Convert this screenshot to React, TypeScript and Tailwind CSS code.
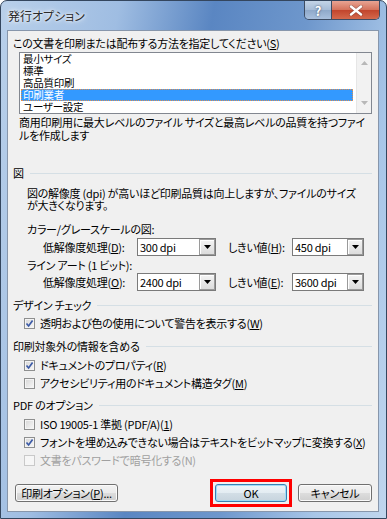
import React from "react";

const Check = ({ checked, disabled, children }: { checked?: boolean; disabled?: boolean; children: React.ReactNode }) => (
  <div className="flex items-center h-[18px] pl-[16px]">
    <span
      className={
        disabled
          ? "w-[11px] h-[11px] border border-[#c9c9c9] bg-[#f6f6f6] flex items-center justify-center"
          : "w-[11px] h-[11px] border border-[#8e8f8f] bg-[linear-gradient(135deg,#d6d6d6,#f8f8f8)] shadow-[inset_0_0_0_1px_#f4f4f4] flex items-center justify-center"
      }
    >
      {checked && (
        <svg width="9" height="9" viewBox="0 0 9 9">
          <path d="M1.5 4.5 L3.6 7 L7.6 1.6" fill="none" stroke="#3b5aa6" strokeWidth="1.7" />
        </svg>
      )}
    </span>
    <span className={disabled ? "ml-[5px] text-[#a0a0a0]" : "ml-[5px]"}>{children}</span>
  </div>
);

const Heading = ({ children, mt }: { children: React.ReactNode; mt: string }) => (
  <div className={`flex items-center h-[13px] pl-[5px] pr-[6px] ${mt}`}>
    <span className="whitespace-nowrap">{children}</span>
    <span className="flex-1 h-px bg-[#d5dfe5] ml-[6px]" />
  </div>
);

const Combo = ({ value, w }: { value: string; w: string }) => (
  <div className={`${w} h-[18px] border border-[#7a7a7a] bg-white flex items-center`}>
    <span className="flex-1 pl-[2px] text-[11px] leading-[13px]">{value}</span>
    <span className="w-[16px] h-[16px] border border-[#9a9a9a] bg-[linear-gradient(#f4f4f4,#dcdcdc)] shadow-[inset_1px_1px_0_#ffffff] flex items-center justify-center">
      <svg width="7" height="4" viewBox="0 0 7 4">
        <path d="M0 0 H7 L3.5 4 Z" fill="#000" />
      </svg>
    </span>
  </div>
);

const btn =
  "h-[18px] rounded-[3px] border border-[#707070] bg-[linear-gradient(#f2f2f2_0%,#ebebeb_50%,#dddddd_50%,#cfcfcf_100%)] shadow-[inset_0_0_0_1px_#fbfbfb] flex items-center justify-center text-[11px]";

export default function App() {
  return (
    <div className="w-[387px] h-[519px] font-['Noto_Sans_CJK_JP','Liberation_Sans',sans-serif] [font-feature-settings:'palt'] tracking-[-0.25px] text-[11px] leading-[13px] text-black">
      <div className="w-full h-full rounded-t-[7px] border border-[#34465e] bg-[linear-gradient(100deg,#b9d0ea_0%,#9fbde2_25%,#5a86c2_45%,#6e97cc_65%,#a8c6e8_85%,#c0d6ee_100%)] flex flex-col">
        <div className="h-[29px] flex items-start">
          <span className="ml-[7px] mt-[7px] text-[12px] leading-[15px] tracking-normal text-[#2b2b2b] [text-shadow:0_0_6px_#ffffff,0_0_3px_#ffffff]">
            発行オプション
          </span>
          <div className="ml-auto mr-[6px] flex h-[19px] rounded-b-[5px] border border-t-0 border-[#3d4c63] overflow-hidden">
            <div className="w-[27px] h-full bg-[linear-gradient(#c3d4e7_0%,#a5bbd6_50%,#8ea8c9_50%,#a9c0de_100%)] border-r border-[#3d4c63] flex items-center justify-center text-white font-bold text-[13px] [text-shadow:0_0_2px_#2a3a55]">
              ?
            </div>
            <div className="w-[47px] h-full bg-[linear-gradient(#e8a493_0%,#d4715a_50%,#c1442c_50%,#d4694c_100%)] flex items-center justify-center">
              <svg width="14" height="11" viewBox="0 0 14 11">
                <path d="M2 1.5 L12 9.5 M12 1.5 L2 9.5" stroke="#3b2020" strokeWidth="3.6" strokeLinecap="round" opacity="0.35" />
                <path d="M2 1.5 L12 9.5 M12 1.5 L2 9.5" stroke="#ffffff" strokeWidth="2.4" strokeLinecap="round" />
              </svg>
            </div>
          </div>
        </div>

        <div className="mx-[6px] mr-[7px] mb-[6px] flex-1 border border-[#8796ab] bg-[#f0f0f0] flex flex-col">
          <div className="mt-[6px] pl-[5px]">
            この文書を印刷または配布する方法を指定してください(<u>S</u>)
          </div>

          <div className="mt-[2px] ml-[11px] mr-[6px] h-[62px] border border-[#828790] bg-white flex">
            <div className="flex-1 flex flex-col pl-[1px] pr-[3px] text-[10.5px] leading-[12px]">
              <div className="h-[12px] pl-[2px]">最小サイズ</div>
              <div className="h-[12px] pl-[2px]">標準</div>
              <div className="h-[12px] pl-[2px]">高品質印刷</div>
              <div className="h-[12px] pl-[2px] bg-[#3399ff] text-white outline-1 outline-dotted outline-[#e09050] -outline-offset-1">印刷業者</div>
              <div className="h-[12px] pl-[2px]">ユーザー設定</div>
            </div>
            <div className="w-[15px] bg-[#f2f2f2] border-l border-[#e6e6e6] flex flex-col items-center justify-between py-[8px]">
              <svg width="7" height="4" viewBox="0 0 7 4">
                <path d="M0 4 H7 L3.5 0 Z" fill="#b8b8b8" />
              </svg>
              <svg width="7" height="4" viewBox="0 0 7 4">
                <path d="M0 0 H7 L3.5 4 Z" fill="#b8b8b8" />
              </svg>
            </div>
          </div>

          <div className="mt-[2px] pl-[11px] whitespace-nowrap">
            商用印刷用に最大レベルのファイル サイズと最高レベルの品質を持つファイ
            <br />
            ルを作成します
          </div>

          <Heading mt="mt-[25px]">図</Heading>

          <div className="mt-[7px] pl-[19px] leading-[12px] whitespace-nowrap">
            図の解像度 (dpi) が高いほど印刷品質は向上しますが、ファイルのサイズ
            <br />
            が大きくなります。
          </div>

          <div className="mt-[12px] pl-[19px]">カラー/グレースケールの図:</div>
          <div className="mt-[2px] flex items-center pl-[35px]">
            <span className="w-[94px]">低解像度処理(<u>D</u>):</span>
            <Combo value="300 dpi" w="w-[79px]" />
            <span className="ml-[12px] w-[64px]">しきい値(<u>H</u>):</span>
            <Combo value="450 dpi" w="w-[72px]" />
          </div>

          <div className="mt-[3px] pl-[19px]">ライン アート (1 ビット):</div>
          <div className="mt-[1px] flex items-center pl-[35px]">
            <span className="w-[94px]">低解像度処理(<u>O</u>):</span>
            <Combo value="2400 dpi" w="w-[79px]" />
            <span className="ml-[12px] w-[64px]">しきい値(<u>E</u>):</span>
            <Combo value="3600 dpi" w="w-[72px]" />
          </div>

          <Heading mt="mt-[8px]">デザイン チェック</Heading>
          <div className="mt-[2px]">
            <Check checked>透明および色の使用について警告を表示する(<u>W</u>)</Check>
          </div>

          <Heading mt="mt-[8px]">印刷対象外の情報を含める</Heading>
          <div className="mt-[3px]">
            <Check checked>ドキュメントのプロパティ(<u>R</u>)</Check>
            <Check>アクセシビリティ用のドキュメント構造タグ(<u>M</u>)</Check>
          </div>

          <Heading mt="mt-[7px]">PDF のオプション</Heading>
          <div className="mt-[3px]">
            <Check>ISO 19005-1 準拠 (PDF/A)(<u>1</u>)</Check>
            <Check checked>フォントを埋め込みできない場合はテキストをビットマップに変換する(<u>X</u>)</Check>
            <Check disabled>文書をパスワードで暗号化する(N)</Check>
          </div>

          <div className="mt-[10px] flex items-center pl-[7px]">
            <button className={`${btn} w-[103px]`}>印刷オプション(<u>P</u>)...</button>
            <div className="ml-[92px] border-[3px] border-[#ff0000] p-[2px]">
              <button className="w-[72px] h-[18px] rounded-[3px] border border-[#3c7fb1] bg-[linear-gradient(#eef4f8_0%,#e3ecf2_50%,#d3dee6_50%,#c7d4de_100%)] shadow-[inset_0_0_0_1px_#9fdcf7] flex items-center justify-center text-[11px]">
                OK
              </button>
            </div>
            <button className={`${btn} ml-[6px] w-[74px]`}>キャンセル</button>
          </div>
        </div>
      </div>
    </div>
  );
}
